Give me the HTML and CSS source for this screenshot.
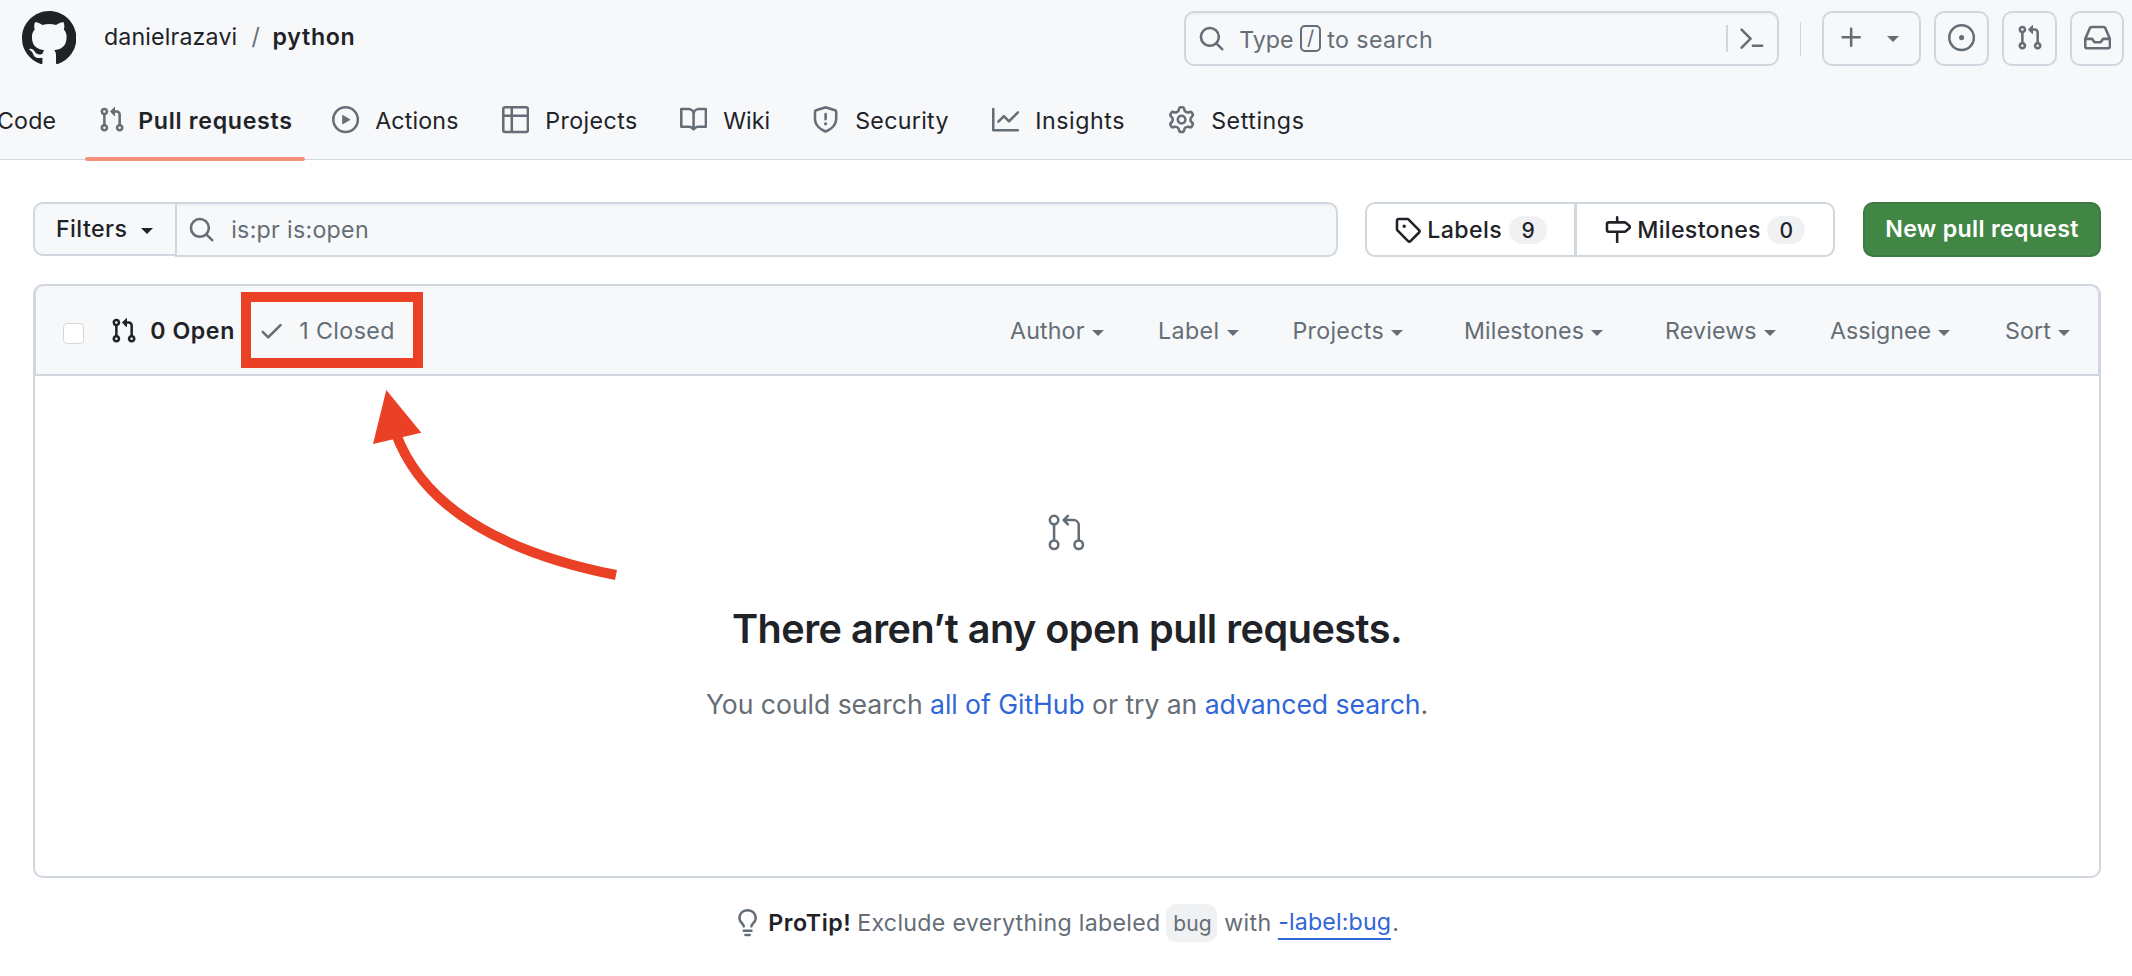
FILE: index.html
```html
<!DOCTYPE html>
<html lang="en">
<head>
<meta charset="utf-8">
<title>Pull requests · danielrazavi/python</title>
<link rel="stylesheet" href="styles.css">
</head>
<body>
<svg class="sprite" aria-hidden="true">
  <symbol id="pr" viewBox="0 0 16 16"><path d="M1.5 3.25a2.25 2.25 0 1 1 3 2.122v5.256a2.251 2.251 0 1 1-1.5 0V5.372A2.25 2.25 0 0 1 1.5 3.25Zm5.677-.177L9.573.677A.25.25 0 0 1 10 .854V2.5h1A2.5 2.5 0 0 1 13.5 5v5.628a2.251 2.251 0 1 1-1.5 0V5a1 1 0 0 0-1-1h-1v1.646a.25.25 0 0 1-.427.177L7.177 3.427a.25.25 0 0 1 0-.354ZM3.75 2.5a.75.75 0 1 0 0 1.5.75.75 0 0 0 0-1.5Zm0 9.5a.75.75 0 1 0 0 1.5.75.75 0 0 0 0-1.5Zm8.25.75a.75.75 0 1 0 1.5 0 .75.75 0 0 0-1.5 0Z"/></symbol>
  <symbol id="search" viewBox="0 0 16 16"><path d="M10.68 11.74a6 6 0 0 1-7.922-8.982 6 6 0 0 1 8.982 7.922l3.04 3.04a.749.749 0 0 1-.326 1.275.749.749 0 0 1-.734-.215ZM11.5 7a4.499 4.499 0 1 0-8.997 0A4.499 4.499 0 0 0 11.5 7Z"/></symbol>
</svg>

<header class="header">
  <div class="topbar">
    <svg class="logo" viewBox="0 0 16 16"><path d="M8 0c4.42 0 8 3.58 8 8a8.013 8.013 0 0 1-5.45 7.59c-.4.08-.55-.17-.55-.38 0-.27.01-1.13.01-2.2 0-.75-.25-1.23-.54-1.48 1.78-.2 3.65-.88 3.65-3.95 0-.88-.31-1.59-.82-2.15.08-.2.36-1.02-.08-2.12 0 0-.67-.22-2.2.82-.64-.18-1.32-.27-2-.27-.68 0-1.36.09-2 .27-1.53-1.03-2.2-.82-2.2-.82-.44 1.1-.16 1.92-.08 2.12-.51.56-.82 1.28-.82 2.15 0 3.06 1.86 3.75 3.64 3.95-.23.2-.44.55-.51 1.07-.46.21-1.61.55-2.33-.66-.15-.24-.6-.83-1.23-.82-.67.01-.27.38.01.53.34.19.73.9.82 1.13.16.45.68 1.31 2.69.94 0 .67.01 1.3.01 1.49 0 .21-.15.45-.55.38A7.995 7.995 0 0 1 0 8c0-4.42 3.58-8 8-8Z"/></svg>
    <div class="crumbs"><span class="owner ls-2">danielrazavi</span><span class="slash">/</span><span class="repo ls-7">python</span></div>
    <div class="global-search">
      <svg class="icon"><use href="#search"/></svg>
      <span class="type">Type</span><kbd class="key">/</kbd><span class="to-search ls-4">to search</span>
      <span class="search-rule"></span>
      <svg class="icon" viewBox="0 0 16 16"><path d="m6.354 8.04-4.773 4.773a.75.75 0 1 0 1.061 1.06L7.945 8.57a.75.75 0 0 0 0-1.06L2.642 2.206a.75.75 0 0 0-1.06 1.061L6.353 8.04ZM8.75 11.5a.75.75 0 0 0 0 1.5h5.5a.75.75 0 0 0 0-1.5h-5.5Z"/></svg>
    </div>
    <span class="top-rule"></span>
    <div class="tool create">
      <svg class="icon" viewBox="0 0 16 16"><path d="M7.75 2a.75.75 0 0 1 .75.75V7h4.25a.75.75 0 0 1 0 1.5H8.5v4.25a.75.75 0 0 1-1.5 0V8.5H2.75a.75.75 0 0 1 0-1.5H7V2.75A.75.75 0 0 1 7.75 2Z"/></svg>
      <i class="caret"></i>
    </div>
    <div class="tool"><svg class="icon" viewBox="0 0 16 16"><path d="M8 9.5a1.5 1.5 0 1 0 0-3 1.5 1.5 0 0 0 0 3Z"/><path d="M8 0a8 8 0 1 1 0 16A8 8 0 0 1 8 0ZM1.5 8a6.5 6.5 0 1 0 13 0 6.5 6.5 0 0 0-13 0Z"/></svg></div>
    <div class="tool"><svg class="icon"><use href="#pr"/></svg></div>
    <div class="tool"><svg class="icon" viewBox="0 0 16 16"><path d="M2.8 2.06A1.75 1.75 0 0 1 4.41 1h7.18c.7 0 1.333.417 1.61 1.06l2.74 6.395c.04.093.06.194.06.295v4.5A1.75 1.75 0 0 1 14.25 15H1.75A1.75 1.75 0 0 1 0 13.25v-4.5c0-.101.02-.202.06-.295Zm1.61.44a.25.25 0 0 0-.23.152L1.887 8H4.75a.75.75 0 0 1 .6.3L6.625 10h2.75l1.275-1.7a.75.75 0 0 1 .6-.3h2.863L11.82 2.652a.25.25 0 0 0-.23-.152Zm10.09 7h-2.875l-1.275 1.7a.75.75 0 0 1-.6.3h-3.5a.75.75 0 0 1-.6-.3L4.375 9.5H1.5v3.75c0 .138.112.25.25.25h12.5a.25.25 0 0 0 .25-.25Z"/></svg></div>
  </div>
  <nav class="tabs">
    <a class="tab"><span class="ls-2">Code</span></a>
    <a class="tab current"><svg class="icon"><use href="#pr"/></svg><span class="ls-7">Pull requests</span></a>
    <a class="tab"><svg class="icon" viewBox="0 0 16 16"><path d="M8 0a8 8 0 1 1 0 16A8 8 0 0 1 8 0ZM1.5 8a6.5 6.5 0 1 0 13 0 6.5 6.5 0 0 0-13 0Zm4.879-2.773 4.264 2.559a.25.25 0 0 1 0 .428l-4.264 2.559A.25.25 0 0 1 6 10.559V5.442a.25.25 0 0 1 .379-.215Z"/></svg><span class="ls-2">Actions</span></a>
    <a class="tab"><svg class="icon" viewBox="0 0 16 16"><path d="M0 1.75C0 .784.784 0 1.75 0h12.5C15.216 0 16 .784 16 1.75v12.5A1.75 1.75 0 0 1 14.25 16H1.75A1.75 1.75 0 0 1 0 14.25ZM6.5 6.5v8h7.75a.25.25 0 0 0 .25-.25V6.5Zm8-1.5V1.75a.25.25 0 0 0-.25-.25H6.5V5Zm-13 1.5v7.75c0 .138.112.25.25.25H5v-8ZM5 5V1.5H1.75a.25.25 0 0 0-.25.25V5Z"/></svg><span class="ls-4">Projects</span></a>
    <a class="tab"><svg class="icon" viewBox="0 0 16 16"><path d="M0 1.75A.75.75 0 0 1 .75 1h4.253c1.227 0 2.317.59 3 1.501A3.743 3.743 0 0 1 11.006 1h4.245a.75.75 0 0 1 .75.75v10.5a.75.75 0 0 1-.75.75h-4.507a2.25 2.25 0 0 0-1.591.659l-.622.621a.75.75 0 0 1-1.06 0l-.622-.621A2.25 2.25 0 0 0 5.258 13H.75a.75.75 0 0 1-.75-.75Zm7.251 10.324.004-5.073-.002-2.253A2.25 2.25 0 0 0 5.003 2.5H1.5v9h3.757a3.75 3.75 0 0 1 1.994.574ZM8.755 4.75l-.004 7.322a3.752 3.752 0 0 1 1.992-.572H14.5v-9h-3.495a2.25 2.25 0 0 0-2.25 2.25Z"/></svg><span>Wiki</span></a>
    <a class="tab"><svg class="icon" viewBox="0 0 16 16"><path d="M7.467.133a1.748 1.748 0 0 1 1.066 0l5.25 1.68A1.75 1.75 0 0 1 15 3.48V7c0 1.566-.32 3.182-1.303 4.682-.983 1.498-2.585 2.813-5.032 3.855a1.697 1.697 0 0 1-1.33 0c-2.447-1.042-4.049-2.357-5.032-3.855C1.32 10.182 1 8.566 1 7V3.48a1.75 1.75 0 0 1 1.217-1.667Zm.61 1.429a.25.25 0 0 0-.153 0l-5.25 1.68a.25.25 0 0 0-.174.238V7c0 1.358.275 2.666 1.057 3.86.784 1.194 2.121 2.34 4.366 3.297a.196.196 0 0 0 .154 0c2.245-.956 3.582-2.104 4.366-3.298C13.225 9.666 13.5 8.36 13.5 7V3.48a.251.251 0 0 0-.174-.237l-5.25-1.68ZM8.75 4.75v3a.75.75 0 0 1-1.5 0v-3a.75.75 0 0 1 1.5 0ZM9 10.5a1 1 0 1 1-2 0 1 1 0 0 1 2 0Z"/></svg><span class="ls-3">Security</span></a>
    <a class="tab"><svg class="icon" viewBox="0 0 16 16"><path d="M1.5 1.75V13.5h13.75a.75.75 0 0 1 0 1.5H.75a.75.75 0 0 1-.75-.75V1.75a.75.75 0 0 1 1.5 0Zm14.28 2.53-5.25 5.25a.75.75 0 0 1-1.06 0L7 7.06 4.28 9.78a.751.751 0 0 1-1.042-.018.751.751 0 0 1-.018-1.042l3.25-3.25a.75.75 0 0 1 1.06 0L10 7.94l4.72-4.72a.751.751 0 0 1 1.042.018.751.751 0 0 1 .018 1.042Z"/></svg><span class="ls-5">Insights</span></a>
    <a class="tab"><svg class="icon" viewBox="0 0 16 16"><path d="M8 0a8.2 8.2 0 0 1 .701.031C9.444.095 9.99.645 10.16 1.29l.288 1.107c.018.066.079.158.212.224.231.114.454.243.668.386.123.082.233.09.299.071l1.103-.303c.644-.176 1.392.021 1.82.63.27.385.506.792.704 1.218.315.675.111 1.422-.364 1.891l-.814.806c-.049.048-.098.147-.088.294.016.257.016.515 0 .772-.01.147.038.246.088.294l.814.806c.475.469.679 1.216.364 1.891a7.977 7.977 0 0 1-.704 1.217c-.428.61-1.176.807-1.82.63l-1.102-.302c-.067-.019-.177-.011-.3.071a5.909 5.909 0 0 1-.668.386c-.133.066-.194.158-.211.224l-.29 1.106c-.168.646-.715 1.196-1.458 1.26a8.006 8.006 0 0 1-1.402 0c-.743-.064-1.289-.614-1.458-1.26l-.289-1.106c-.018-.066-.079-.158-.212-.224a5.738 5.738 0 0 1-.668-.386c-.123-.082-.233-.09-.299-.071l-1.103.303c-.644.176-1.392-.021-1.82-.63a8.12 8.12 0 0 1-.704-1.218c-.315-.675-.111-1.422.363-1.891l.815-.806c.05-.048.098-.147.088-.294a6.214 6.214 0 0 1 0-.772c.01-.147-.038-.246-.088-.294l-.815-.806C.635 6.045.431 5.298.746 4.623a7.92 7.92 0 0 1 .704-1.217c.428-.61 1.176-.807 1.82-.63l1.102.302c.067.019.177.011.3-.071.214-.143.437-.272.668-.386.133-.066.194-.158.211-.224l.29-1.106C6.009.645 6.556.095 7.299.03 7.53.01 7.764 0 8 0Zm-.571 1.525c-.036.003-.108.036-.137.146l-.289 1.105c-.147.561-.549.967-.998 1.189-.173.086-.34.183-.5.29-.417.278-.97.423-1.529.27l-1.103-.303c-.109-.03-.175.016-.195.045-.22.312-.412.644-.573.99-.014.031-.021.11.059.19l.815.806c.411.406.562.957.53 1.456a4.709 4.709 0 0 0 0 .582c.032.499-.119 1.05-.53 1.456l-.815.806c-.081.08-.073.159-.059.19.162.346.353.677.573.989.02.03.085.076.195.046l1.102-.303c.56-.153 1.113-.008 1.53.27.161.107.328.204.501.29.447.222.85.629.997 1.189l.289 1.105c.029.109.101.143.137.146a6.6 6.6 0 0 0 1.142 0c.036-.003.108-.036.137-.146l.289-1.105c.147-.561.549-.967.998-1.189.173-.086.34-.183.5-.29.417-.278.97-.423 1.529-.27l1.103.303c.109.029.175-.016.195-.045.22-.313.411-.644.573-.99.014-.031.021-.11-.059-.19l-.815-.806c-.411-.406-.562-.957-.53-1.456a4.709 4.709 0 0 0 0-.582c-.032-.499.119-1.05.53-1.456l.815-.806c.081-.08.073-.159.059-.19a6.464 6.464 0 0 0-.573-.989c-.02-.03-.085-.076-.195-.046l-1.102.303c-.56.153-1.113.008-1.53-.27a4.44 4.44 0 0 0-.501-.29c-.447-.222-.85-.629-.997-1.189l-.289-1.105c-.029-.11-.101-.143-.137-.146a6.6 6.6 0 0 0-1.142 0ZM11 8a3 3 0 1 1-6 0 3 3 0 0 1 6 0ZM9.5 8a1.5 1.5 0 1 0-3.001.001A1.5 1.5 0 0 0 9.5 8Z"/></svg><span class="ls-5">Settings</span></a>
  </nav>
</header>

<main class="main">
  <div class="toolbar">
    <div class="filters"><span class="ls-4">Filters</span><i class="caret"></i></div>
    <div class="query"><svg class="icon"><use href="#search"/></svg><span class="ls-3">is:pr is:open</span></div>
    <div class="subnav">
      <a class="sub labels"><svg class="icon" viewBox="0 0 16 16"><path d="M1 7.775V2.75C1 1.784 1.784 1 2.75 1h5.025c.464 0 .91.184 1.238.513l6.25 6.25a1.75 1.75 0 0 1 0 2.474l-5.026 5.026a1.75 1.75 0 0 1-2.474 0l-6.25-6.25A1.752 1.752 0 0 1 1 7.775Zm1.5 0c0 .066.026.13.073.177l6.25 6.25a.25.25 0 0 0 .354 0l5.025-5.025a.25.25 0 0 0 0-.354l-6.25-6.25a.25.25 0 0 0-.177-.073H2.75a.25.25 0 0 0-.25.25ZM6 5a1 1 0 1 1 0 2 1 1 0 0 1 0-2Z"/></svg><span class="sub-name ls-4">Labels</span><span class="count">9</span></a>
      <a class="sub milestones"><svg class="icon" viewBox="0 0 16 16"><path d="M7.75 0a.75.75 0 0 1 .75.75V3h3.634c.414 0 .814.147 1.13.414l2.07 1.75a1.75 1.75 0 0 1 0 2.672l-2.07 1.75a1.75 1.75 0 0 1-1.13.414H8.5v5.25a.75.75 0 0 1-1.5 0V10H2.75A1.75 1.75 0 0 1 1 8.25v-3.5C1 3.784 1.784 3 2.75 3H7V.75A.75.75 0 0 1 7.75 0Zm4.384 8.5a.25.25 0 0 0 .161-.059l2.07-1.75a.248.248 0 0 0 0-.382l-2.07-1.75a.25.25 0 0 0-.161-.059H2.75a.25.25 0 0 0-.25.25v3.5c0 .138.112.25.25.25h9.384Z"/></svg><span class="sub-name ls-3">Milestones</span><span class="count">0</span></a>
    </div>
    <a class="new-pr ls-3">New pull request</a>
  </div>

  <section class="box">
    <div class="box-head">
      <span class="checkbox"></span>
      <a class="state open"><svg class="icon"><use href="#pr"/></svg><span class="ls-5">0 Open</span></a>
      <a class="state closed"><svg class="icon" viewBox="0 0 16 16"><path d="M13.78 4.22a.75.75 0 0 1 0 1.06l-7.25 7.25a.75.75 0 0 1-1.06 0L2.22 9.28a.751.751 0 0 1 .018-1.042.751.751 0 0 1 1.042-.018L6 10.94l6.72-6.72a.75.75 0 0 1 1.06 0Z"/></svg><span class="ls-4">1 Closed</span></a>
      <div class="menus">
        <span class="menu"><span class="ls-2">Author</span><i class="caret"></i></span>
        <span class="menu"><span class="ls-4">Label</span><i class="caret"></i></span>
        <span class="menu"><span class="ls-3">Projects</span><i class="caret"></i></span>
        <span class="menu"><span class="ls-2">Milestones</span><i class="caret"></i></span>
        <span class="menu"><span class="ls-2">Reviews</span><i class="caret"></i></span>
        <span class="menu"><span>Assignee</span><i class="caret"></i></span>
        <span class="menu"><span class="ls-2">Sort</span><i class="caret"></i></span>
      </div>
    </div>
    <div class="blank">
      <svg class="blank-icon" viewBox="0 0 24 24"><path d="M16 19.25a3.25 3.25 0 1 1 6.5 0 3.25 3.25 0 0 1-6.5 0Zm-14.5 0a3.25 3.25 0 1 1 6.5 0 3.25 3.25 0 0 1-6.5 0Zm0-14.5a3.25 3.25 0 1 1 6.5 0 3.25 3.25 0 0 1-6.5 0ZM4.75 3a1.75 1.75 0 1 0 .001 3.501A1.75 1.75 0 0 0 4.75 3Zm0 14.5a1.75 1.75 0 1 0 .001 3.501A1.75 1.75 0 0 0 4.75 17.5Zm14.5 0a1.75 1.75 0 1 0 .001 3.501 1.75 1.75 0 0 0-.001-3.501Z"/><path d="M13.405 1.72a.75.75 0 0 1 0 1.06L12.185 4h4.065A3.75 3.75 0 0 1 20 7.75v8.75a.75.75 0 0 1-1.5 0V7.75a2.25 2.25 0 0 0-2.25-2.25h-4.064l1.22 1.22a.75.75 0 0 1-1.061 1.06l-2.5-2.5a.75.75 0 0 1 0-1.06l2.5-2.5a.75.75 0 0 1 1.06 0ZM4.75 7.25A.75.75 0 0 1 5.5 8v8A.75.75 0 0 1 4 16V8a.75.75 0 0 1 .75-.75Z"/></svg>
      <h3 class="blank-title">There aren’t any open pull requests.</h3>
      <p class="blank-text">You could search <a class="link">all of GitHub</a> or try an <a class="link">advanced search</a>.</p>
    </div>
  </section>

  <div class="protip">
    <svg class="icon" viewBox="0 0 16 16"><path d="M8 1.5c-2.363 0-4 1.69-4 3.75 0 .984.424 1.625.984 2.304l.214.253c.223.264.47.556.673.848.284.411.537.896.621 1.49a.75.75 0 0 1-1.484.211c-.04-.282-.163-.547-.37-.847a8.456 8.456 0 0 0-.542-.68c-.084-.1-.173-.205-.268-.32C3.201 7.75 2.5 6.766 2.5 5.25 2.5 2.31 4.863 0 8 0s5.5 2.31 5.5 5.25c0 1.516-.701 2.5-1.328 3.259-.095.115-.184.22-.268.319-.207.245-.383.453-.541.681-.208.3-.33.565-.37.847a.751.751 0 0 1-1.485-.212c.084-.593.337-1.078.621-1.489.203-.292.45-.584.673-.848.075-.088.147-.173.213-.253.561-.679.985-1.32.985-2.304 0-2.06-1.637-3.75-4-3.75ZM5.75 12h4.5a.75.75 0 0 1 0 1.5h-4.5a.75.75 0 0 1 0-1.5ZM6 15.25a.75.75 0 0 1 .75-.75h2.5a.75.75 0 0 1 0 1.5h-2.5a.75.75 0 0 1-.75-.75Z"/></svg>
    <strong class="ls-5">ProTip!</strong><span class="tip-text ls-3">Exclude everything labeled</span><span class="chip ls-2">bug</span><span class="tip-with ls-4">with</span><a class="tip-link ls-2">-label:bug</a><span>.</span>
  </div>
</main>

<svg class="annotation" viewBox="0 0 2132 976">
  <rect x="246" y="297" width="172" height="66"/>
  <path class="arrow-line" d="M396 434Q435 539 616 575"/>
  <path class="arrow-head" d="M386.3 390 421.3 432.7 373 444Z"/>
</svg>
</body>
</html>
```

FILE: styles.css
```css
* { box-sizing: border-box; }

body {
  margin: 0;
  width: 2132px;
  height: 976px;
  overflow: hidden;
  position: relative;
  background: #fff;
  color: #1f2328;
  font: 400 23.2px/32px Inter, "Liberation Sans", sans-serif;
  white-space: nowrap;
}

svg { display: block; flex: none; fill: currentColor; }
.sprite { display: none; }
.icon { width: 27.2px; height: 27.2px; }

/* Tracking steps */
.ls-2 { letter-spacing: .15px; }
.ls-3 { letter-spacing: .3px; }
.ls-4 { letter-spacing: .42px; }
.ls-5 { letter-spacing: .56px; }
.ls-7 { letter-spacing: .7px; }

/* Header */
.header { height: 160px; background: #f6f8fa; border-bottom: 1px solid #d0d7de; }
.topbar { display: flex; height: 77px; align-items: center; padding-left: 22px; }
.topbar > * { flex: none; }
.logo { width: 54.4px; height: 54.4px; }
.crumbs { display: grid; grid-template-columns: 147.5px 21px auto; width: 1080px; margin: -4px 0 0 27.6px; }
.slash { color: #656d76; }
.repo { font-weight: 600; }

.global-search {
  display: flex; align-items: center;
  width: 595px; height: 55px; padding-left: 12px;
  border: 2px solid #d0d7de; border-radius: 10px;
  box-shadow: inset 0 2px 0 rgba(208, 215, 222, .2);
  color: #656d76;
}
.type { width: 61px; margin-left: 14px; padding-top: 2px; }
.key {
  width: 21px; height: 27px; border: 2px solid #656d76; border-radius: 5px;
  font: 400 20px/23px Inter, sans-serif; text-align: center;
}
.to-search { width: 399px; margin-left: 6px; padding-top: 2px; }
.search-rule { width: 2px; height: 27px; margin-right: 10px; background: #d0d7de; }
.top-rule { width: 1px; height: 34px; margin: 0 21px; background: #d0d7de; }
.tool {
  display: flex; align-items: center; justify-content: center;
  width: 54.4px; height: 55px; margin-right: 13.4px; padding-bottom: 1px;
  border: 2px solid #d0d7de; border-radius: 10px; color: #656d76;
}
.create { width: 99px; gap: 21px; padding-right: 6px; }
.tool .caret { margin-top: 2px; }

/* Tabs */
.tabs { display: grid; grid-template-columns: 101px 234px 170px 178px 132px 180px 176px auto; height: 83px; margin-left: -3px; }
.tab { display: flex; align-items: center; gap: 16px; height: 86px; position: relative; }
.tab span { padding-top: 2px; }
.current { font-weight: 600; gap: 13px; }
.tab .icon { color: #656d76; }
.current::after { content: ""; position: absolute; left: -13px; bottom: 2px; width: 220px; height: 4px; border-radius: 2px; background: #f7907b; }

/* Toolbar */
.main { padding: 42px 31px 0 33px; }
.toolbar { display: flex; height: 55px; font-weight: 500; }
.filters {
  display: flex; align-items: center; gap: 14px;
  width: 144px; height: 54px; padding-left: 21px;
  border: 2px solid #d0d7de; border-radius: 10px 0 0 10px; background: #f6f8fa;
}
.caret { border: 6px solid transparent; border-top: 6.5px solid; border-bottom: 0; margin-top: 4px; }
.query {
  display: flex; align-items: center; gap: 16px;
  width: 1163px; margin-left: -2px; padding-left: 11px;
  border: 2px solid #d0d7de; border-radius: 0 10px 10px 0; background: #f6f8fa;
  box-shadow: inset 0 2px 0 rgba(208, 215, 222, .2);
  color: #656d76; font-weight: 400;
}
.subnav { display: flex; width: 470px; margin: 0 28px 0 27px; border: 2px solid #d0d7de; border-radius: 10px; }
.sub { display: flex; align-items: center; }
.labels { width: 210px; padding-left: 27px; border-right: 3px solid #d0d7de; }
.milestones { padding-left: 27px; }
.sub-name { margin-left: 6px; }
.labels .sub-name { width: 82px; }
.milestones .sub-name { width: 130px; }
.count { width: 38px; height: 28px; border-radius: 14px; background: #eff1f3; font-size: 21px; line-height: 29px; text-align: center; }
.new-pr {
  width: 238px; border: 2px solid #3d7a42; border-radius: 10px; background: #428646; color: #fff;
  font-weight: 600; line-height: 50px; text-align: center;
}

/* List box */
.box { height: 594px; margin-top: 27px; border: 2px solid #d0d7de; border-radius: 10px; }
.box-head {
  display: flex; align-items: center;
  height: 90px; padding: 2px 0 0 28px;
  border-bottom: 2px solid #d0d7de; border-radius: 8px 8px 0 0; background: #f6f8fa;
  box-shadow: inset 1px 0 #d0d7de, inset -1px 0 #d0d7de;
}
.checkbox { width: 21px; height: 21px; margin-top: 5px; border: 1.5px solid #d5d8db; border-radius: 4px; background: #fff; }
.state { display: flex; align-items: center; gap: 13px; }
.open { width: 148px; margin-left: 26px; font-weight: 600; }
.closed { width: 752px; gap: 14px; color: #656d76; }
.menus { display: grid; grid-template-columns: 148px 134.5px 171.5px 201px 165px 175px auto; color: #656d76; }
.menu { display: flex; align-items: center; gap: 7px; }
.menu .caret { margin-top: 3px; }

.blank { display: flex; flex-direction: column; align-items: center; padding-top: 136px; }
.blank-icon { width: 40.8px; height: 40.8px; margin-right: 1px; color: #656d76; }
.blank-title { margin: 48px 0 0; font-size: 39.6px; line-height: 56px; font-weight: 600; letter-spacing: -.5px; }
.blank-text { margin: 27px 0 0; font-size: 26.6px; line-height: 40px; letter-spacing: -.05px; color: #656d76; }
.link { color: #2f66d8; }

.protip { display: flex; align-items: center; height: 38px; margin: 26px 0 0 701px; color: #656d76; }
.protip strong { width: 89px; margin-left: 7px; color: #1f2328; font-weight: 600; }
.tip-text { width: 309px; }
.chip { width: 51px; height: 38px; padding-left: 7px; border-radius: 10px; background: #eff1f3; font-size: 21px; line-height: 40px; }
.tip-with { width: 54px; margin-left: 7px; }
.tip-link { margin-right: 1px; border-bottom: 2px solid #2f66d8; color: #2f66d8; }

/* Hand-drawn highlight over the list */
.annotation { position: absolute; left: 0; top: 0; width: 2132px; height: 976px; fill: none; stroke: #ea4025; stroke-width: 10; }
.arrow-head { fill: #ea4025; stroke: none; }
```
